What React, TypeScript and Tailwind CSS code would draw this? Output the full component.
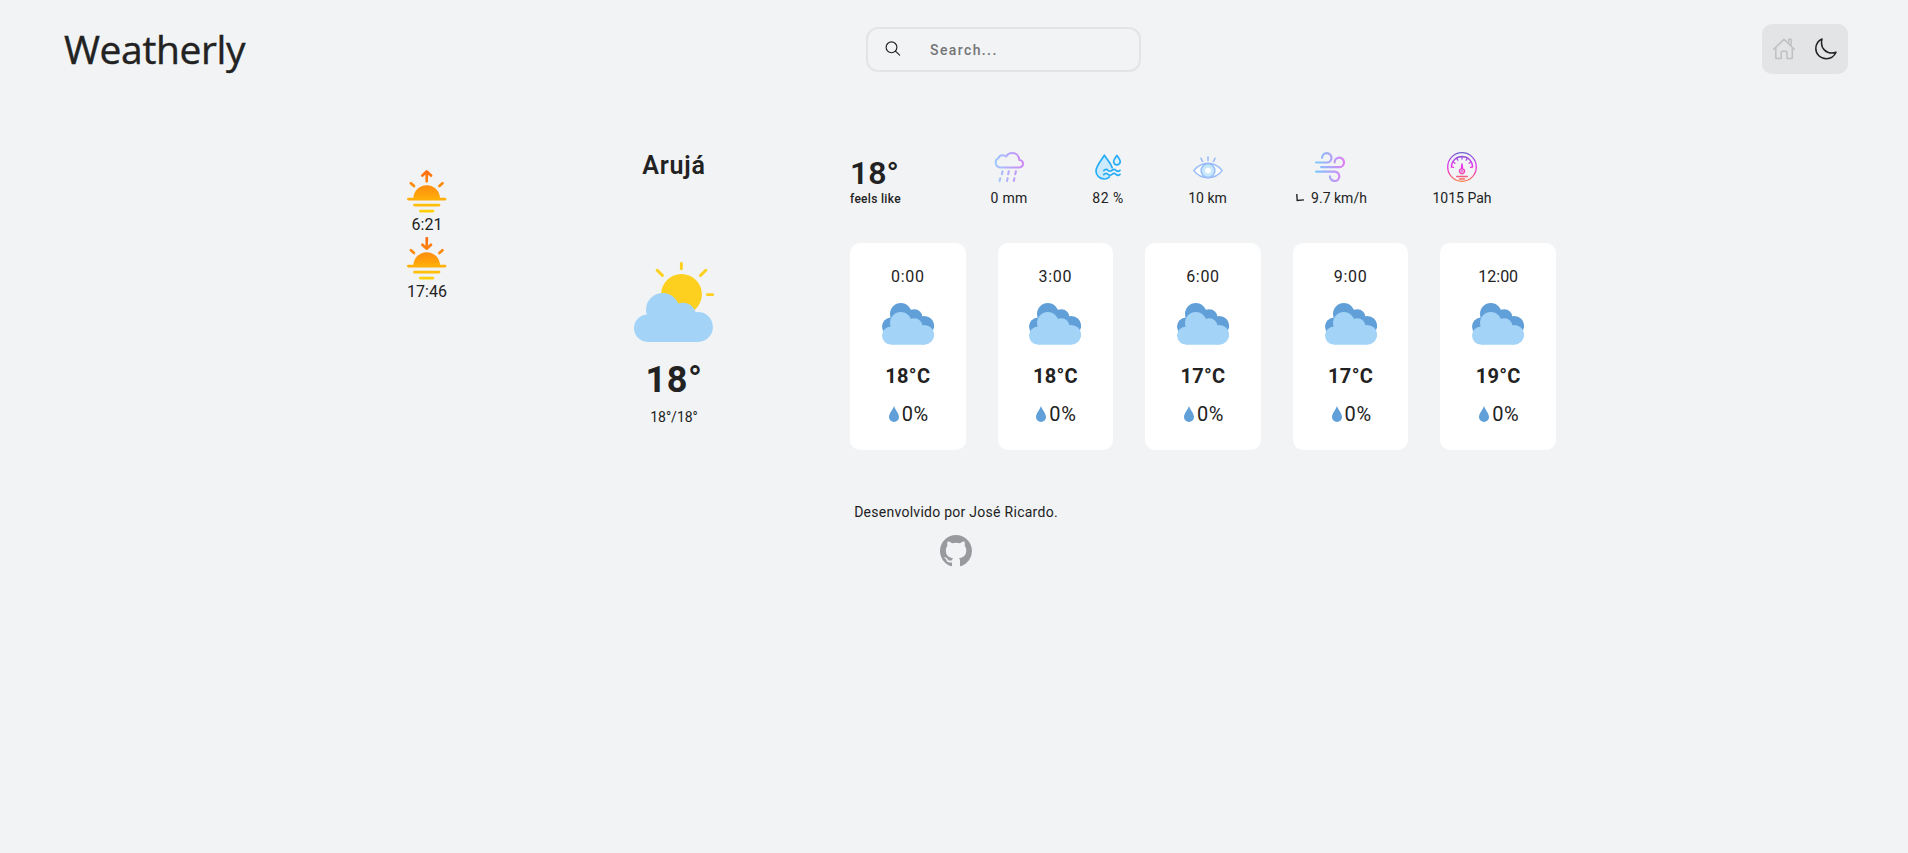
import type { ReactNode } from "react";

function SearchIcon() {
  return (
    <svg className="mb-[2px] block h-4 w-4 shrink-0" viewBox="0 0 16 16" fill="none" stroke="#222" strokeWidth="1.15" strokeLinecap="round">
      <circle cx="6.5" cy="6.3" r="5.4" />
      <path d="M10.4 10.2 14.6 14.2" />
    </svg>
  );
}

function HomeIcon() {
  return (
    <svg className="block h-[22px] w-[22px]" viewBox="0 0 22 22" fill="none" stroke="#bfc0c1" strokeWidth="1.5" strokeLinejoin="round" strokeLinecap="round">
      <path d="M.7 11.3 11 1.2l10.3 10.1M2.8 9.6v11h5.4v-6.2q0-1.2 1.2-1.2h3.4q1.2 0 1.2 1.2v6.2h5.3v-11M15.7 5.4V1.2h2.4v6.6" />
    </svg>
  );
}

function MoonIcon() {
  return (
    <svg className="block h-[22px] w-[22px]" viewBox="0 0 22 22" fill="none" stroke="#222" strokeWidth="1.5" strokeLinejoin="round">
      <path d="M7 1C2.9 2.9.8 6.3.8 10.6c0 5.7 4.6 10.1 10.5 10.1 4.3 0 8-2.5 9.7-6.4-1.4.6-2.7.8-4.1.8C11.1 15.1 6.5 10.6 6.5 5c0-1.4.1-2.7.5-4Z" />
    </svg>
  );
}

function SunHorizon({ rising }: { rising: boolean }) {
  return (
    <svg className="block h-[43px] w-10" viewBox="0 0 40 43" fill="none" strokeWidth="2.7" strokeLinecap="round" strokeLinejoin="round">
      <defs>
        <linearGradient id="sun-heat" gradientUnits="userSpaceOnUse" x1="0" y1="0" x2="0" y2="43">
          <stop offset="0" stopColor="#ff6a10" />
          <stop offset="0.5" stopColor="#ff9b0c" />
          <stop offset="1" stopColor="#ffcf08" />
        </linearGradient>
      </defs>
      <g stroke="url(#sun-heat)">
        {rising ? (
          <path d="M19.8 1.5 19.7 11.3M15.4 5.5l4.3-4 4.3 4" />
        ) : (
          <path d="M19.8 1.2 19.7 11.6M15.4 7.8l4.3 4 4.3-4" />
        )}
        <path d="m3.900 13.200 3.100 2.900M35.500 13.200l-3.100 2.900" />
      </g>
      <path d="M6.400 28.500a13.300 13.300 0 0 1 26.600 0Z" fill="url(#sun-heat)" />
      <path d="M1.400 29.100H38" stroke="#ffae0a" />
      <path d="M7.500 35.100H32" stroke="#ffbe0a" />
      <path d="M13.400 41.100H26" stroke="#ffcf08" />
    </svg>
  );
}

function PartlyCloudy() {
  return (
    <svg className="block h-20 w-20" viewBox="0 0 80 80">
      <circle cx="47.5" cy="32.3" r="20.4" fill="#fdd020" />
      <path d="M47.400 1.500v5.200M23.200 8.200l5.200 5.200M71.800 8.200l-5.200 5.200M73.400 32.600h5.200" stroke="#fdd020" strokeWidth="2.9" strokeLinecap="round" />
      <g fill="#a3d3f7">
        <circle cx="13.6" cy="66.2" r="13.6" />
        <circle cx="28.7" cy="47.7" r="16.7" />
        <circle cx="49" cy="53.6" r="12.9" />
        <circle cx="64" cy="65" r="14.9" />
        <path d="M13.6 55H58V65H64V79.9H13.6Z" />
      </g>
    </svg>
  );
}

function CloudShape() {
  return (
    <>
      <circle cx="9" cy="32.6" r="9" />
      <circle cx="18.8" cy="19.8" r="10.8" />
      <circle cx="32.2" cy="23.8" r="8.5" />
      <circle cx="42.2" cy="31.8" r="9.9" />
      <path d="M9 25H38V32H42.2V41.7H9Z" />
    </>
  );
}

function Cloudy() {
  return (
    <svg className="block h-[42px] w-[52px]" viewBox="0 0 52 42">
      <g fill="#609fd8" transform="translate(0 -9)">
        <CloudShape />
      </g>
      <g fill="#a3d3f7">
        <CloudShape />
      </g>
    </svg>
  );
}

function Drop() {
  return (
    <svg className="block h-4 w-[10px]" viewBox="0 0 10 16" fill="#609fd8">
      <path d="M5 0C6 3.4 10 7.4 10 11a5 5 0 0 1-10 0C0 7.4 4 3.4 5 0Z" />
    </svg>
  );
}

function RainIcon() {
  return (
    <svg className="block h-[30px] w-[30px]" viewBox="0 0 30 30" fill="none" stroke="url(#rain-tint)" strokeWidth="2" strokeLinecap="round" strokeLinejoin="round">
      <defs>
        <linearGradient id="rain-tint" gradientUnits="userSpaceOnUse" x1="0" y1="15" x2="30" y2="15">
          <stop offset="0" stopColor="#9ccdfd" />
          <stop offset="1" stopColor="#cf86f6" />
        </linearGradient>
      </defs>
      <path d="M5.8 15.4A5 5 0 0 1 4.7 5.9C4.9 4.4 6.5 3.2 8.6 3.2c1.8 0 2.9.6 3.6 1.3C13.4 2.2 15.7 1 18.2 1c4 0 6.9 2.9 7.1 6.9 2.2.3 3.7 1.7 3.7 3.7 0 2.3-1.6 3.8-4 3.8Z" />
      <path d="M8.500 19.300 7.900 22.300M6.200 26.200 5.600 29M14.800 19.300 14.200 22.300M13.600 26.200 13 29M21.900 19.300 21.300 22.300M20.400 26.200 19.800 29" />
    </svg>
  );
}

function HumidityIcon() {
  return (
    <svg className="block h-[26px] w-[26px]" viewBox="0 0 26 26" fill="none" stroke="#27adf5" strokeWidth="1.7" strokeLinecap="round" strokeLinejoin="round">
      <path d="M9.500 1.500C6.500 6 1 11.500 1 17c0 4 3.500 8 8.500 8l5-2.500-5.500-3 2-4h6C16 10 12 6 9.500 1.500Z" fill="#cbeafd" stroke="none" />
      <path d="M14.500 22.900C13 24.300 11.500 25 9.500 25 4.700 25 1 21.600 1 17 1 12 6.400 6.200 9.400 1.200 12.400 6 15.800 9 17.200 13.800" />
      <path d="M21.900 1.500c1.200 2 3.300 4 3.300 6a3.300 3.300 0 0 1-6.600 0c0-2 2.100-4 3.300-6Z" fill="#dff3fe" />
      <path d="M8.800 16.600c1.500-1.500 3-1.500 4.200-.3s2.800 1.200 4 0 2.800-1.200 4 0 2.700 1.200 4 0M8.800 20.600c1.500-1.500 3-1.500 4.200-.3s2.800 1.200 4 0 2.800-1.200 4 0 2.700 1.200 4 0" />
    </svg>
  );
}

function EyeIcon() {
  return (
    <svg className="block h-[30px] w-[30px]" viewBox="0 0 30 30" fill="none" stroke="#98bbf9" strokeWidth="1.5" strokeLinecap="round" strokeLinejoin="round">
      <path d="M.8 18.600C4.500 14 9.500 11.300 15 11.300s10.500 2.700 14.200 7.300c-3.700 4.700-8.700 7.200-14.200 7.200S4.500 23.300.8 18.600Z" fill="#fbfdff" />
      <circle cx="15" cy="18.6" r="6.9" fill="#c5e8fb" />
      <circle cx="15" cy="18.6" r="2.9" fill="#fff" stroke="none" />
      <path d="M15 4.800v3.600M8 6.300l1.500 3.100M22 6.300l-1.500 3.100" />
    </svg>
  );
}

function WindIcon() {
  return (
    <svg className="block h-[30px] w-[30px]" viewBox="0 0 30 30" fill="none" stroke="url(#wind-tint)" strokeWidth="2.2" strokeLinecap="round">
      <defs>
        <linearGradient id="wind-tint" gradientUnits="userSpaceOnUse" x1="0" y1="15" x2="30" y2="15">
          <stop offset="0" stopColor="#79ccfb" />
          <stop offset="1" stopColor="#e07df5" />
        </linearGradient>
      </defs>
      <path d="M1.100 10.500h10.700a4.700 4.700 0 1 0-4.700-4.700M6.100 15.100h18.200a4.700 4.700 0 1 0-4.700-4.700M1.100 19.600h18.500a4.700 4.700 0 1 1-4.700 4.700" />
    </svg>
  );
}

function GaugeIcon() {
  return (
    <svg className="block h-[30px] w-[30px]" viewBox="0 0 30 30" fill="none" stroke="url(#gauge-tint)" strokeWidth="1.3" strokeLinecap="round" strokeLinejoin="round">
      <defs>
        <linearGradient id="gauge-tint" gradientUnits="userSpaceOnUse" x1="15" y1="0" x2="15" y2="30">
          <stop offset="0" stopColor="#6a62d2" />
          <stop offset="0.45" stopColor="#e636ee" />
          <stop offset="0.65" stopColor="#f03fc0" />
          <stop offset="1" stopColor="#fb7b3c" />
        </linearGradient>
      </defs>
      <circle cx="15" cy="15" r="14.3" />
      <path d="M6.500 15.300 4.400 15C4.400 9 9.300 4.500 15 4.500S25.600 9 25.600 15l-2.100.3M15 4.500v2.600M9.600 6l1.300 2.300M20.400 6l-1.300 2.300M5.800 9.800 8 11.200M24.200 9.800 22 11.200" />
      <path d="M14.400 16.800 15 12l.6 4.800a2.500 2.500 0 1 1-1.200 0ZM15 18.700v1" strokeWidth="1.5" />
      <path d="M9.700 24.500h10.600M12.500 27h5" />
    </svg>
  );
}

function GithubMark() {
  return (
    <svg className="block h-8 w-8" viewBox="0 0 16 16" fill="#999a9e">
      <path d="M8 0C3.580 0 0 3.580 0 8c0 3.540 2.290 6.530 5.470 7.590.4.070.55-.17.55-.38 0-.19-.01-.82-.01-1.490-2.010.37-2.530-.49-2.690-.94-.09-.23-.48-.94-.82-1.130-.28-.15-.68-.52-.01-.53.63-.01 1.080.58 1.230.82.72 1.210 1.870.87 2.330.66.07-.52.28-.87.51-1.070-1.780-.2-3.640-.89-3.640-3.950 0-.87.31-1.590.82-2.150-.08-.2-.36-1.020.08-2.120 0 0 .67-.21 2.200.82.64-.18 1.320-.27 2-.27s1.360.09 2 .27c1.530-1.040 2.200-.82 2.200-.82.44 1.100.16 1.920.08 2.120.51.56.82 1.270.82 2.150 0 3.070-1.870 3.750-3.650 3.950.29.25.54.73.54 1.480 0 1.070-.01 1.930-.01 2.200 0 .21.15.46.55.38A8.010 8.010 0 0 0 16 8c0-4.420-3.580-8-8-8Z" />
    </svg>
  );
}

function Stat({ icon, children }: { icon: ReactNode; children: ReactNode }) {
  return (
    <div className="flex flex-col items-center">
      <div className="flex h-[30px] items-center">{icon}</div>
      <div className="mt-2 flex h-4 items-center text-sm leading-4 whitespace-nowrap">{children}</div>
    </div>
  );
}

const forecast = [
  { time: "0:00", temp: "18°C" },
  { time: "3:00", temp: "18°C" },
  { time: "6:00", temp: "17°C" },
  { time: "9:00", temp: "17°C" },
  { time: "12:00", temp: "19°C" },
];

export default function App() {
  return (
    <div className="min-h-screen bg-[#f1f3f5] font-['Roboto','Liberation_Sans',sans-serif] text-[#222]">
      <header className="flex h-[98px] items-center justify-between pr-[60px] pl-16">
        <h1 className="w-[181px] font-['Open_Sans','Noto_Sans',sans-serif] text-[39px] leading-[50px] font-medium tracking-[-0.4px] whitespace-nowrap [-webkit-text-stroke:0.4px_#222]">
          Weatherly
        </h1>
        <label className="mt-px flex h-[45px] w-[275px] items-center rounded-xl border-2 border-[#e3e4e6] pl-[17px]">
          <SearchIcon />
          <input
            className="ml-[29px] w-[180px] bg-transparent text-sm font-medium tracking-[1.4px] outline-none placeholder:text-[#757575]"
            placeholder="Search..."
          />
        </label>
        <div className="flex h-[50px] w-[86px] items-center justify-between rounded-[10px] bg-[#e3e4e6] px-[11px]">
          <HomeIcon />
          <MoonIcon />
        </div>
      </header>

      <main className="flex pt-[54px] pl-[407px]">
        <section className="flex w-10 flex-col items-center pt-[18px] text-base leading-6">
          <SunHorizon rising />
          <p>6:21</p>
          <SunHorizon rising={false} />
          <p>17:46</p>
        </section>

        <section className="ml-[137px] flex w-[180px] flex-col items-center">
          <h2 className="text-[25px] leading-7 font-semibold tracking-[0.8px]">Arujá</h2>
          <div className="mt-[82px]">
            <PartlyCloudy />
          </div>
          <p className="mt-[17px] text-[36px] leading-[42px] font-bold tracking-[0.5px]">18°</p>
          <p className="mt-1.5 text-sm leading-5">18°/18°</p>
        </section>

        <section className="ml-[86px] w-[706px]">
          <div className="grid grid-cols-[109px_100px_98px_101px_143px_122px]">
            <div className="pt-[3px]">
              <p className="text-[32px] leading-9 font-semibold">18°</p>
              <p className="text-xs leading-4 font-medium tracking-[0.3px]">feels like</p>
            </div>
            <Stat icon={<RainIcon />}>
              <span className="tracking-[0.3px]">0 mm</span>
            </Stat>
            <Stat icon={<HumidityIcon />}>
              <span className="tracking-[0.5px]">82 %</span>
            </Stat>
            <Stat icon={<EyeIcon />}>10 km</Stat>
            <Stat icon={<WindIcon />}>
              <svg className="mr-[7px] ml-1 block h-2 w-2" viewBox="0 0 8 8" fill="none" stroke="#222" strokeWidth="1.4">
                <path d="M.8 0 1.2 6.5l6.8-.6" />
              </svg>
              9.7 km/h
            </Stat>
            <Stat icon={<GaugeIcon />}>1015 Pah</Stat>
          </div>
          <div className="mt-9 grid grid-cols-5 gap-8">
            {forecast.map((f) => (
              <article key={f.time} className="flex h-[207px] flex-col items-center rounded-[10px] bg-white pt-[22px]">
                <p className={f.time.length === 4 ? "text-base leading-6 tracking-[0.7px]" : "text-base leading-6"}>
                  {f.time}
                </p>
                <div className="mt-[14px]">
                  <Cloudy />
                </div>
                <p className="mt-[19px] text-xl leading-6 font-bold tracking-[0.3px]">{f.temp}</p>
                <div className="mt-[14px] flex items-center gap-[3px] pl-[2px] text-xl leading-6 tracking-[0.6px]">
                  <Drop />
                  <span>0%</span>
                </div>
              </article>
            ))}
          </div>
        </section>
      </main>

      <footer className="mt-[52px] ml-[855px] flex w-[202px] flex-col items-center">
        <p className="text-sm leading-5 tracking-[0.27px] whitespace-nowrap">Desenvolvido por José Ricardo.</p>
        <div className="mt-[13px]">
          <GithubMark />
        </div>
      </footer>
    </div>
  );
}
